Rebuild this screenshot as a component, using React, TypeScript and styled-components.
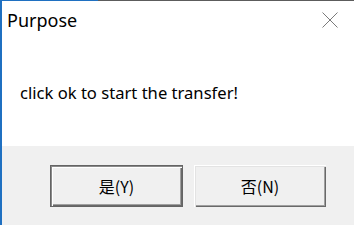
import React from "react";
import styled, { createGlobalStyle } from "styled-components";

const Global = createGlobalStyle`
  html, body { margin: 0; padding: 0; background: #ffffff; }
  body { width: 354px; height: 225px; overflow: hidden; }
`;

const Window = styled.div`
  width: 354px;
  height: 225px;
  box-sizing: border-box;
  border-left: 2px solid #1f70c1;
  display: flex;
  flex-direction: column;
  font-family: "Noto Sans", "Noto Sans CJK SC", sans-serif;
  color: #000;
`;

const TopEdge = styled.div`
  height: 1px;
  flex: none;
  background: linear-gradient(to right, #1f70c1 0 96px, #5c5c5c 96px);
`;

const TitleBar = styled.div`
  height: 38px;
  flex: none;
  display: flex;
  align-items: center;
  justify-content: space-between;
  padding: 0 16px 0 5px;
  background: #fff;
`;

const Title = styled.span`
  font-size: 18px;
  line-height: 1;
`;

const CloseIcon = styled.svg`
  width: 16px;
  height: 16px;
  display: block;
`;

const Content = styled.div`
  flex: 1;
  background: #fff;
  display: flex;
  align-items: flex-start;
  padding: 42px 0 0 18px;
  font-size: 16.6px;
`;

const Footer = styled.div`
  height: 79px;
  flex: none;
  background: #f0f0f0;
  display: flex;
  justify-content: flex-end;
  align-items: flex-start;
  gap: 11px;
  padding: 19px 28px 0 0;
  box-sizing: border-box;
`;

const Button = styled.button<{ $default?: boolean }>`
  width: ${(p) => (p.$default ? 133 : 132)}px;
  height: 42px;
  margin: 0;
  padding: 0;
  background: #f0f0f0;
  font-family: "Noto Sans CJK SC", "Noto Sans", sans-serif;
  font-size: 16px;
  color: #000;
  box-sizing: border-box;
  border: ${(p) => (p.$default ? "1px solid #646464" : "none")};
  box-shadow: ${(p) =>
    p.$default
      ? "inset 1px 1px 0 #8a8a8a, inset 2px 2px 0 #ffffff, inset -1px -1px 0 #696969, inset -2px -2px 0 #a0a0a0"
      : "inset 1px 1px 0 #ffffff, inset 2px 2px 0 #e3e3e3, inset -1px -1px 0 #696969, inset -2px -2px 0 #a0a0a0"};
  display: flex;
  align-items: center;
  justify-content: center;
`;

export default function App() {
  return (
    <>
      <Global />
      <Window>
        <TopEdge />
        <TitleBar>
          <Title>Purpose</Title>
          <CloseIcon viewBox="0 0 16 16" aria-label="close">
            <path d="M0.5 0.5 L15.5 15.5 M15.5 0.5 L0.5 15.5" stroke="#7a7a7a" strokeWidth="1" fill="none" />
          </CloseIcon>
        </TitleBar>
        <Content>click ok to start the transfer!</Content>
        <Footer>
          <Button $default>是(Y)</Button>
          <Button>否(N)</Button>
        </Footer>
      </Window>
    </>
  );
}
